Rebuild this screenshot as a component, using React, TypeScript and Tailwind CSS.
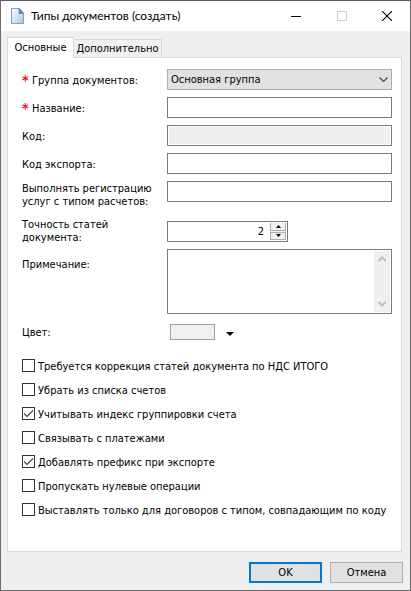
import { useState } from "react";

interface IRowProps {
  label: string;
  htmlFor: string;
  required?: boolean;
  className?: string;
  labelClass?: string;
  children: React.ReactNode;
}

const fieldStyling = "w-full h-[21px] border border-[#7a7a7a] bg-white px-1 outline-none";

const tallLabel = "pt-px leading-[13px]";

const Row = ({
  label,
  htmlFor,
  required,
  className = "",
  labelClass = "pt-[5px] leading-[14px]",
  children,
}: IRowProps) => (
  <div className={`flex items-start ${className}`}>
    <label htmlFor={htmlFor} className={`flex w-[145px] shrink-0 ${labelClass}`}>
      {required && (
        <span className="w-[10px] shrink-0 text-[14px] leading-3 font-bold text-[#ff0033]">*</span>
      )}
      <span className="whitespace-pre">{label}</span>
    </label>
    <div className="min-w-0 flex-1">{children}</div>
  </div>
);

interface ICheckProps {
  id: string;
  label: string;
  checked: boolean;
  onToggle: () => void;
}

const Check = ({ id, label, checked, onToggle }: ICheckProps) => (
  <div className="flex h-6 items-center">
    <span className="relative h-[13px] w-[13px] shrink-0">
      <input
        id={id}
        type="checkbox"
        checked={checked}
        onChange={onToggle}
        className="block h-[13px] w-[13px] appearance-none border border-[#333333] bg-white"
      />
      {checked && (
        <svg viewBox="0 0 13 13" className="pointer-events-none absolute inset-0 h-[13px] w-[13px]">
          <path d="M2 6.5 L5 9.5 L11 3.5" fill="none" stroke="#444444" strokeWidth="1.2" />
        </svg>
      )}
    </span>
    <label htmlFor={id} className="pt-[3px] pl-[3px] whitespace-nowrap">
      {label}
    </label>
  </div>
);

const TitleBar = () => (
  <header className="flex h-[30px] shrink-0 items-center bg-white pl-[10px]">
    <svg viewBox="0 0 13 16" className="h-4 w-[13px] shrink-0">
      <defs>
        <linearGradient id="sheet" x1="0" y1="0" x2="1" y2="1">
          <stop offset="0" stopColor="#f4faff" />
          <stop offset="0.5" stopColor="#d3e6f8" />
          <stop offset="1" stopColor="#9cc4ea" />
        </linearGradient>
      </defs>
      <path d="M0.5 0.5 H8.5 L12.5 5 V15.5 H0.5 Z" fill="url(#sheet)" stroke="#8f9fb2" />
      <path d="M8 0.5 L12.5 5.5 H8 Z" fill="#3f87cf" stroke="#4a7fb8" strokeWidth="0.6" />
    </svg>
    <h1 className="flex-1 pl-[7px] font-['Lato',sans-serif] text-[12px] whitespace-nowrap">
      Типы документов (создать)
    </h1>
    <button type="button" aria-label="Свернуть" className="flex h-full w-[46px] items-center justify-center">
      <svg viewBox="0 0 10 10" className="h-[10px] w-[10px]">
        <path d="M0 5.5 H10" stroke="#000000" />
      </svg>
    </button>
    <button
      type="button"
      aria-label="Развернуть"
      disabled
      className="flex h-full w-[45px] items-center justify-center"
    >
      <svg viewBox="0 0 10 10" className="h-[10px] w-[10px]">
        <path d="M0.5 0.5 H9.5 V9.5 H0.5 Z" fill="none" stroke="#cccccc" />
      </svg>
    </button>
    <button type="button" aria-label="Закрыть" className="flex h-full w-[46px] items-center justify-center">
      <svg viewBox="0 0 10 10" className="h-[10px] w-[10px]">
        <path d="M0 0 L10 10 M10 0 L0 10" stroke="#000000" strokeWidth="1.1" />
      </svg>
    </button>
  </header>
);

const options = [
  "Требуется коррекция статей документа по НДС ИТОГО",
  "Убрать из списка счетов",
  "Учитывать индекс группировки счета",
  "Связывать с платежами",
  "Добавлять префикс при экспорте",
  "Пропускать нулевые операции",
  "Выставлять только для договоров с типом, совпадающим по коду",
];

export default function App() {
  const [checks, setChecks] = useState([false, false, true, false, true, false, false]);
  const [precision, setPrecision] = useState(2);

  function toggle(index: number) {
    setChecks(checks.map((value, i) => (i === index ? !value : value)));
  }

  return (
    <div className="flex min-h-screen flex-col border border-[#6b6b6b] border-t-[#5b5862] bg-[#efefef] font-['DejaVu_Sans_Condensed','DejaVu_Sans',sans-serif] text-[11px] leading-[14px] text-black">
      <TitleBar />

      <form
        className="flex flex-1 flex-col pr-[7px] pb-[7px] pl-[6px]"
        onSubmit={(e) => e.preventDefault()}
      >
        <div role="tablist" className="flex items-end pt-[6px]">
          <button
            type="button"
            role="tab"
            aria-selected="true"
            className="relative -mb-px h-[21px] w-[67px] border border-b-0 border-[#d9d9d9] bg-white pb-px"
          >
            Основные
          </button>
          <button
            type="button"
            role="tab"
            aria-selected="false"
            className="h-[18px] w-[88px] border-t border-r border-[#d9d9d9] bg-[#f0f0f0] pt-px"
          >
            Дополнительно
          </button>
        </div>

        <div
          role="tabpanel"
          className="mr-px flex-1 border border-[#d9d9d9] bg-white pt-[11px] pr-[9px] pb-7 pl-[14px]"
        >
          <Row label="Группа документов:" htmlFor="group" required className="mb-[7px]">
            <div className="relative">
              <select
                id="group"
                className="block h-[21px] w-full appearance-none border border-[#adadad] bg-[#e1e1e1] px-[3px] pt-px outline-none"
              >
                <option>Основная группа</option>
              </select>
              <svg viewBox="0 0 9 6" className="pointer-events-none absolute top-2 right-1 h-[6px] w-[9px]">
                <path d="M0.5 0.5 L4.5 4.5 L8.5 0.5" fill="none" stroke="#444444" strokeWidth="1.2" />
              </svg>
            </div>
          </Row>
          <Row label="Название:" htmlFor="name" required className="mb-[7px]">
            <input id="name" type="text" className={`block ${fieldStyling}`} />
          </Row>
          <Row label="Код:" htmlFor="code" className="mb-[7px]">
            <input
              id="code"
              type="text"
              disabled
              className="block h-[21px] w-full border border-[#7a7a7a] bg-[#efefef] px-1 inset-ring inset-ring-white"
            />
          </Row>
          <Row label="Код экспорта:" htmlFor="export" className="mb-[7px]">
            <input id="export" type="text" className={`block ${fieldStyling}`} />
          </Row>
          <Row
            label={"Выполнять регистрацию\nуслуг с типом расчетов:"}
            htmlFor="service"
            labelClass={tallLabel}
            className="mb-[9px]"
          >
            <input id="service" type="text" className={`block ${fieldStyling}`} />
          </Row>
          <Row
            label={"Точность статей\nдокумента:"}
            htmlFor="precision"
            labelClass={tallLabel}
            className="mb-[5px]"
          >
            <div className="mt-[4px] flex h-[21px] w-[121px] border border-[#7a7a7a] bg-white p-px">
              <input
                id="precision"
                type="text"
                value={precision}
                onChange={(e) => setPrecision(parseInt(e.target.value) || 0)}
                className="min-w-0 flex-1 pr-[6px] text-right outline-none"
              />
              <div className="flex w-4 flex-col gap-px bg-[#efefef]">
                <button
                  type="button"
                  aria-label="Больше"
                  onClick={() => setPrecision(precision + 1)}
                  className="flex flex-1 items-center justify-center border border-t-0 border-[#adadad] bg-[#f0f0f0]"
                >
                  <svg viewBox="0 0 5 3" className="h-[3px] w-[5px]">
                    <path d="M0 3 L2.5 0 L5 3 Z" fill="#000000" />
                  </svg>
                </button>
                <button
                  type="button"
                  aria-label="Меньше"
                  onClick={() => setPrecision(precision - 1)}
                  className="flex flex-1 items-center justify-center border border-[#adadad] bg-[#f0f0f0]"
                >
                  <svg viewBox="0 0 5 3" className="h-[3px] w-[5px]">
                    <path d="M0 0 L2.5 3 L5 0 Z" fill="#000000" />
                  </svg>
                </button>
              </div>
            </div>
          </Row>
          <Row label="Примечание:" htmlFor="note" labelClass="pt-[9px]" className="mb-[10px]">
            <div className="flex h-[65px] border border-[#7a7a7a] bg-white p-px">
              <textarea id="note" className="min-w-0 flex-1 resize-none px-1 outline-none" />
              <div className="flex w-4 flex-col items-center justify-between bg-[#efefef] py-[5px]">
                <svg viewBox="0 0 8 6" className="h-[6px] w-2">
                  <path d="M0.5 5 L4 1.5 L7.5 5" fill="none" stroke="#bfbfbf" strokeWidth="2" />
                </svg>
                <svg viewBox="0 0 8 6" className="h-[6px] w-2">
                  <path d="M0.5 1 L4 4.5 L7.5 1" fill="none" stroke="#bfbfbf" strokeWidth="2" />
                </svg>
              </div>
            </div>
          </Row>
          <Row label="Цвет:" htmlFor="color" labelClass="pt-[2px]">
            <div className="flex items-center gap-[11px] pl-[3px]">
              <button
                id="color"
                type="button"
                className="h-4 w-[45px] border border-[#a0a0a0] bg-[#f0f0f0]"
              />
              <button type="button" aria-label="Выбрать цвет" className="pt-[3px]">
                <svg viewBox="0 0 8 4" className="block h-1 w-2">
                  <path d="M0 0 H8 L4 4 Z" fill="#000000" />
                </svg>
              </button>
            </div>
          </Row>

          <div className="pt-[13px]">
            {options.map((option, i) => (
              <Check
                key={option}
                id={`option-${i}`}
                label={option}
                checked={checks[i]}
                onToggle={() => toggle(i)}
              />
            ))}
          </div>
        </div>

        <div className="flex justify-end gap-2 pt-[10px]">
          <button type="submit" className="h-[21px] w-[73px] border-2 border-[#0078d7] bg-[#e1e1e1]">
            OK
          </button>
          <button type="button" className="h-[21px] w-[73px] border border-[#adadad] bg-[#e1e1e1]">
            Отмена
          </button>
        </div>
      </form>
    </div>
  );
}
